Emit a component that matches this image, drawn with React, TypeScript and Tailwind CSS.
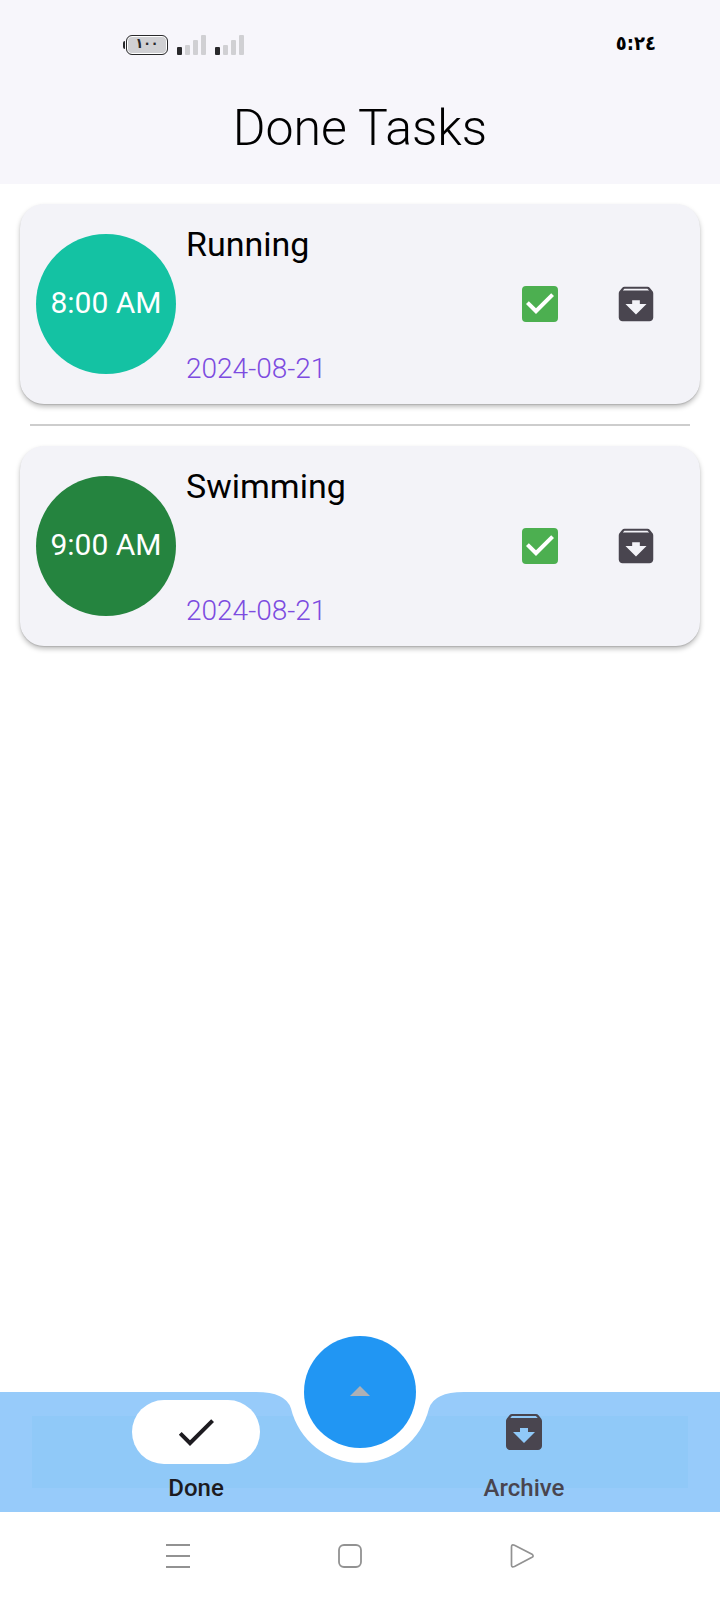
import React, { useState } from "react";

type Task = { title: string; time: string; date: string; color: string };

const tasks: Task[] = [
  { title: "Running", time: "8:00 AM", date: "2024-08-21", color: "bg-[#14c2a3]" },
  { title: "Swimming", time: "9:00 AM", date: "2024-08-21", color: "bg-[#25843f]" },
];

function ArchiveIcon({ className }: { className: string }) {
  return (
    <svg viewBox="0 0 24 24" fill="currentColor" className={className} aria-hidden="true">
      <path d="M20.54 5.23l-1.39-1.68C18.88 3.21 18.47 3 18 3H6c-.47 0-.88.21-1.16.55L3.46 5.23C3.17 5.57 3 6.02 3 6.5V19c0 1.1.9 2 2 2h14c1.1 0 2-.9 2-2V6.5c0-.48-.17-.93-.46-1.27zM12 17.5L6.5 12H10v-2h4v2h3.5L12 17.5zM5.12 5l.81-1h12l.94 1H5.12z" />
    </svg>
  );
}

function Signal() {
  return (
    <svg viewBox="0 0 30 20" className="h-5 w-[30px]" aria-hidden="true">
      <rect x="0" y="12" width="5" height="8" rx="1" fill="#29292b" />
      <rect x="8" y="10" width="5" height="10" rx="1" fill="#d0d0d3" />
      <rect x="16" y="5" width="5" height="15" rx="1" fill="#d0d0d3" />
      <rect x="24" y="0" width="5" height="20" rx="1" fill="#d0d0d3" />
    </svg>
  );
}

function StatusBar() {
  return (
    <div className="flex h-[72px] items-center justify-between pt-[18px] pr-16 pl-[123px]">
      <div className="flex items-center gap-[9px]">
        <div className="flex items-center gap-px">
          <span className="h-2 w-[2px] rounded-l-sm bg-[#29292b]" />
          <span className="flex h-5 w-[42px] items-center justify-center rounded-md border border-[#29292b] bg-[#d0d0d3] pb-1 font-['DejaVu_Sans_Condensed','DejaVu_Sans',sans-serif] text-sm leading-4 font-bold text-[#29292b] ring-1 ring-white ring-inset">
            ١٠٠
          </span>
        </div>
        <div className="flex gap-2">
          <Signal />
          <Signal />
        </div>
      </div>
      <span className="pb-1 font-['DejaVu_Sans_Condensed','DejaVu_Sans',sans-serif] text-xl leading-5 font-bold text-black">
        ٥:٢٤
      </span>
    </div>
  );
}

function TaskCard({ task }: { task: Task }) {
  const [done, setDone] = useState(true);
  return (
    <article className="flex items-center rounded-3xl bg-[#f3f3f8] px-4 py-5 shadow-[0_3px_5px_rgba(0,0,0,0.25),0_1px_1px_rgba(0,0,0,0.12)]">
      <div
        className={`flex size-[140px] shrink-0 items-center justify-center rounded-full pb-[2px] text-[30px] leading-10 text-white ${task.color}`}
      >
        {task.time}
      </div>
      <div className="flex h-40 min-w-0 flex-1 flex-col justify-between pl-[10px]">
        <h2 className="truncate text-[34px] leading-10 text-black">{task.title}</h2>
        <p className="text-[28px] leading-[30px] font-light text-[#7c4be0]">{task.date}</p>
      </div>
      <label className="grid h-24 w-24 shrink-0 cursor-pointer place-items-center">
        <input
          type="checkbox"
          aria-label={`${task.title} done`}
          checked={done}
          onChange={() => setDone(!done)}
          className="col-start-1 row-start-1 size-9 appearance-none rounded border-4 border-[#4caf50] checked:bg-[#4caf50]"
        />
        {done && (
          <svg viewBox="3 3 18 18" className="pointer-events-none z-10 col-start-1 row-start-1 size-9" aria-hidden="true">
            <path fill="#fff" d="M10 17l-5-5 1.41-1.41L10 14.17l7.59-7.59L19 8z" />
          </svg>
        )}
      </label>
      <button
        type="button"
        aria-label={`Archive ${task.title}`}
        className="grid h-24 w-24 shrink-0 place-items-center text-[#49454f]"
      >
        <ArchiveIcon className="size-[46px]" />
      </button>
    </article>
  );
}

function BottomNav() {
  return (
    <nav className="relative bg-[#97cbfa] px-8 py-6">
      <div className="flex h-[72px] justify-around bg-[#90c9f8]">
        <a href="#done" aria-current="page" className="-mt-4 flex flex-1 flex-col items-center gap-2 text-[#1d1b20]">
          <span className="flex h-16 w-32 shrink-0 items-center justify-center rounded-full bg-white">
            <svg viewBox="0 0 24 24" fill="currentColor" className="size-12" aria-hidden="true">
              <path d="M9 16.17L4.83 12l-1.42 1.41L9 19 21 7l-1.41-1.41z" />
            </svg>
          </span>
          <span className="text-2xl leading-8 font-medium">Done</span>
        </a>
        <a href="#archive" className="-mt-4 flex flex-1 flex-col items-center gap-2 text-[#49454f]">
          <span className="flex h-16 w-32 shrink-0 items-center justify-center">
            <ArchiveIcon className="size-12" />
          </span>
          <span className="text-2xl leading-8 font-medium">Archive</span>
        </a>
      </div>
      <svg
        viewBox="0 0 208 72"
        className="pointer-events-none absolute top-0 left-1/2 h-[72px] w-52 -translate-x-1/2"
        aria-hidden="true"
      >
        <path fill="#fff" d="M0 0Q30 0 35 16.6A71 71 0 0 0 173 16.6Q178 0 208 0Z" />
      </svg>
      <button
        type="button"
        aria-label="Add task"
        className="absolute top-0 left-1/2 flex size-28 -translate-x-1/2 -translate-y-1/2 items-center justify-center rounded-full bg-[#2196f3] pb-[2px]"
      >
        <svg viewBox="0 0 20 10" className="h-[10px] w-5" aria-hidden="true">
          <path d="M0 10L10 0L20 10Z" fill="#adb0b5" />
        </svg>
      </button>
    </nav>
  );
}

function SystemBar() {
  return (
    <div className="flex h-[88px] items-center justify-center gap-[148px] pr-5 text-[#929292]">
      <button type="button" aria-label="Recent apps">
        <svg viewBox="0 0 24 24" className="size-6" fill="none" stroke="currentColor" strokeWidth="2">
          <path d="M0 1H24M0 12H24M0 23H24" />
        </svg>
      </button>
      <button type="button" aria-label="Home">
        <svg viewBox="0 0 24 24" className="size-6" fill="none" stroke="currentColor" strokeWidth="1.8">
          <rect x="1" y="1" width="22" height="22" rx="5" />
        </svg>
      </button>
      <button type="button" aria-label="Back">
        <svg viewBox="0 0 24 24" className="size-6" fill="none" stroke="currentColor" strokeWidth="1.7">
          <path d="M1.5 3Q1.5 0 4.5 1.3L22 10.2Q24.2 12 22 13.3L4.5 22.5Q1.5 23.8 1.5 21Z" />
        </svg>
      </button>
    </div>
  );
}

export default function App() {
  return (
    <div className="flex min-h-screen flex-col bg-white font-['Roboto',sans-serif]">
      <header className="bg-[#f7f6fb]">
        <StatusBar />
        <h1 className="flex h-28 items-center justify-center text-[50px] font-light text-black">Done Tasks</h1>
      </header>
      <main className="flex flex-1 flex-col gap-5 p-5">
        {tasks.map((task, i) => (
          <React.Fragment key={task.title}>
            {i > 0 && <hr className="mx-[10px] border-t-2 border-[#cdcdcd]" />}
            <TaskCard task={task} />
          </React.Fragment>
        ))}
      </main>
      <BottomNav />
      <SystemBar />
    </div>
  );
}
